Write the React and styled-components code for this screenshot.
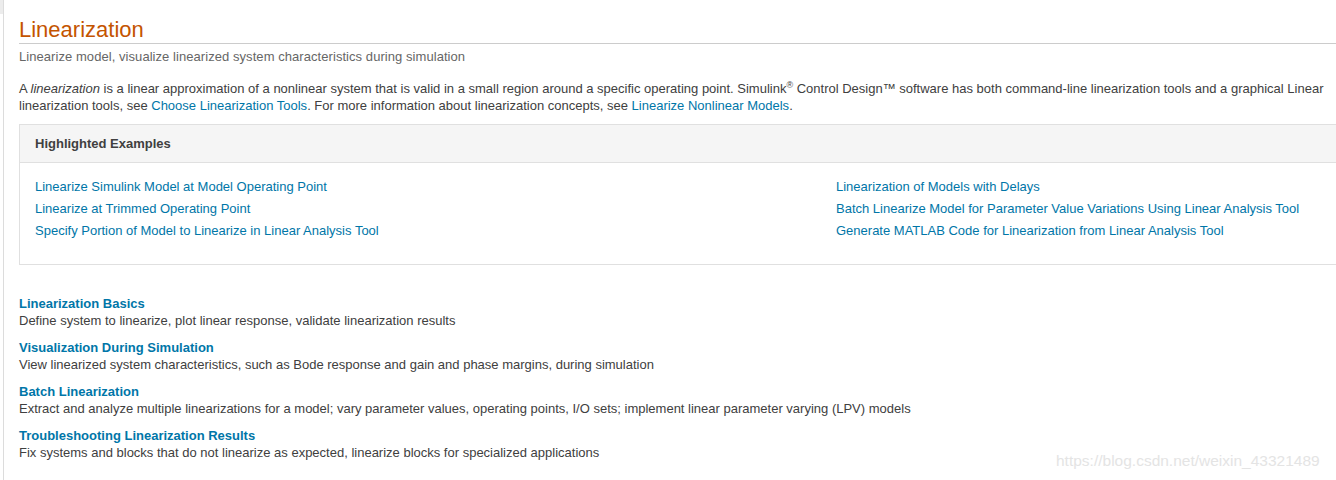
import React from "react";
import styled, { createGlobalStyle } from "styled-components";

const GlobalStyle = createGlobalStyle`
  html, body {
    margin: 0;
    padding: 0;
    background: #fff;
    overflow: hidden;
  }
  body {
    font-family: "Liberation Sans", Arial, sans-serif;
    font-size: 13px;
    color: #404040;
  }
`;

const examples = [
  "Linearize Simulink Model at Model Operating Point",
  "Linearization of Models with Delays",
  "Linearize at Trimmed Operating Point",
  "Batch Linearize Model for Parameter Value Variations Using Linear Analysis Tool",
  "Specify Portion of Model to Linearize in Linear Analysis Tool",
  "Generate MATLAB Code for Linearization from Linear Analysis Tool",
];

const topics = [
  {
    title: "Linearization Basics",
    text: "Define system to linearize, plot linear response, validate linearization results",
  },
  {
    title: "Visualization During Simulation",
    text: "View linearized system characteristics, such as Bode response and gain and phase margins, during simulation",
  },
  {
    title: "Batch Linearization",
    text: "Extract and analyze multiple linearizations for a model; vary parameter values, operating points, I/O sets; implement linear parameter varying (LPV) models",
  },
  {
    title: "Troubleshooting Linearization Results",
    text: "Fix systems and blocks that do not linearize as expected, linearize blocks for specialized applications",
  },
];

export default function App() {
  return (
    <>
      <GlobalStyle />
      <Frame>
        <Gutter />
        <Page>
          <Title>Linearization</Title>
          <Subtitle>
            Linearize model, visualize linearized system characteristics during
            simulation
          </Subtitle>
          <Intro>
            A <em>linearization</em> is a linear approximation of a nonlinear
            system that is valid in a small region around a specific operating
            point. Simulink<sup>®</sup> Control Design™ software has both
            command-line linearization tools and a graphical Linear
            <br />
            linearization tools, see <Link>Choose Linearization Tools</Link>.
            For more information about linearization concepts, see{" "}
            <Link>Linearize Nonlinear Models</Link>.
          </Intro>

          <Panel>
            <PanelHeader>Highlighted Examples</PanelHeader>
            <PanelBody>
              {examples.map((e) => (
                <Link key={e}>{e}</Link>
              ))}
            </PanelBody>
          </Panel>

          <Topics>
            {topics.map((t) => (
              <Topic key={t.title}>
                <TopicTitle>{t.title}</TopicTitle>
                <TopicText>{t.text}</TopicText>
              </Topic>
            ))}
          </Topics>
        </Page>
      </Frame>
      <Watermark>https://blog.csdn.net/weixin_43321489</Watermark>
    </>
  );
}

const Frame = styled.div`
  display: flex;
  min-height: 480px;
`;

const Gutter = styled.div`
  width: 3px;
  flex: none;
  background: linear-gradient(#ececec 0, #ececec 14px, #fff 14px);
`;

const Page = styled.div`
  flex: none;
  width: 1634px;
  border-left: 1px solid #dcdcdc;
  padding-left: 15px;
`;

const Title = styled.h1`
  margin: 17px 0 0;
  font-size: 22px;
  line-height: 26px;
  font-weight: normal;
  color: #c45400;
  border-bottom: 1px solid #cccccc;
`;

const Subtitle = styled.p`
  margin: 4px 0 0;
  line-height: 17px;
  color: #666666;
  letter-spacing: 0.06px;
`;

const Intro = styled.p`
  margin: 15px 0 0;
  line-height: 17px;
  white-space: nowrap;
  color: #404040;

  sup {
    font-size: 9px;
    line-height: 0;
    vertical-align: 5px;
  }
`;

const Link = styled.a`
  color: #0076a8;
  text-decoration: none;
  cursor: pointer;
`;

const Panel = styled.section`
  margin-top: 10px;
  border: 1px solid #e0e0e0;
`;

const PanelHeader = styled.div`
  height: 37px;
  line-height: 37px;
  padding: 0 15px;
  background: #f5f5f5;
  border-bottom: 1px solid #e0e0e0;
  font-weight: bold;
  color: #404040;
`;

const PanelBody = styled.div`
  display: grid;
  grid-template-columns: 1fr 1fr;
  grid-auto-rows: 22px;
  align-items: center;
  padding: 12px 15px 23px;
`;

const Topics = styled.div`
  display: flex;
  flex-direction: column;
  gap: 10px;
  margin-top: 30px;
`;

const Topic = styled.div`
  display: flex;
  flex-direction: column;
  line-height: 17px;
`;

const TopicTitle = styled(Link)`
  font-weight: bold;
`;

const TopicText = styled.div`
  color: #404040;
`;

const Watermark = styled.div`
  position: absolute;
  left: 1056px;
  top: 452px;
  font-size: 15.5px;
  color: #e4e4e4;
  white-space: nowrap;
`;
